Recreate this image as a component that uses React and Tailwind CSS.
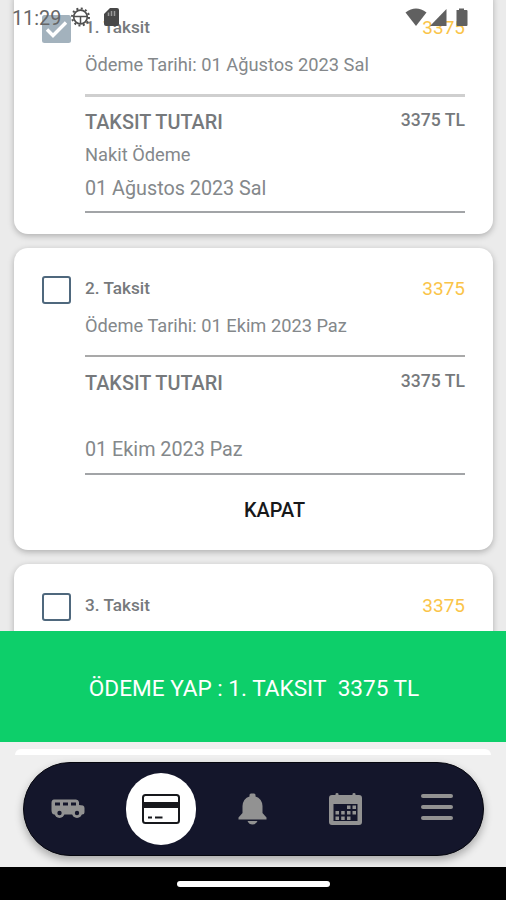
import React from "react";

function Check({ checked }) {
  return checked ? (
    <svg className="h-7 w-[29px] shrink-0" viewBox="0 0 29 28">
      <rect width="29" height="28" rx="2.5" fill="#a3b2bd" />
      <path d="M5 14.5 11 20.5 24 7.5" fill="none" stroke="#fff" strokeWidth="3.4" />
    </svg>
  ) : (
    <div className="h-7 w-[29px] shrink-0 rounded-[3px] border-2 border-[#4f687d] bg-white" />
  );
}

function T({ className = "", children }) {
  return <span className={`block h-6 leading-6 whitespace-pre ${className}`}>{children}</span>;
}

function Installment({ n, date, method, checked, close, headerOnly, box, rule, gap, paid }) {
  return (
    <section className={`ml-[14px] w-[479px] shrink-0 rounded-[14px] bg-white px-7 shadow-[0_2px_6px_rgba(0,0,0,0.26)] ${box}`}>
      <div className="flex h-[59px] items-start pt-7">
        <Check checked={checked} />
        <div className="ml-[14px] flex flex-1 justify-between">
          <T className="text-[17.2px] font-medium text-[#76797c]">{`${n}. Taksit`}</T>
          <T className="pt-px text-[19px] text-[#fac448]">3375</T>
        </div>
      </div>
      {!headerOnly && (
        <div className="ml-[43px]">
          <div className="h-[48px] pt-[7px]"><T className="text-[18.25px] text-[#84888b]">{`Ödeme Tarihi: ${date}`}</T></div>
          <div className={rule} />
          <div className={`flex justify-between ${gap}`}>
            <T className="pt-px text-[19.85px] font-medium text-[#76797c]">TAKSIT TUTARI</T>
            <T className="-mt-[2px] text-[17.6px] font-medium text-[#76797c]">3375 TL</T>
          </div>
          <div className="h-[33px] pt-[9px]">{method && <T className="text-[18.3px] text-[#84888b]">{method}</T>}</div>
          <div className={`pt-[10px] ${paid}`}><T className="text-[19.75px] text-[#84888b]">{date}</T></div>
          <div className="h-[2px] bg-[#a2a4a7]" />
        </div>
      )}
      {close && <div className="ml-[202px] mt-[24px]"><T className="text-[19.9px] font-medium text-[#17181a]">KAPAT</T></div>}
    </section>
  );
}

function StatusBar() {
  return (
    <header className="absolute left-0 top-0 z-10 flex h-9 w-full pl-3">
      <span className="mt-[7px] w-[58px] text-[19.8px] leading-6 text-[#666]">11:29</span>
      <svg className="mt-[7px] h-5 w-5" viewBox="0 0 20 20" fill="none" stroke="#505050">
        <circle cx="10.500" cy="10" r="6.800" strokeWidth="1.700" />
        <circle cx="10.500" cy="10" r="8.500" strokeWidth="2" strokeDasharray="2 2.450" />
        <path d="M4 9.500H17M10.500 9.500V16" strokeWidth="1.500" />
      </svg>
      <svg className="ml-[14px] mt-2 h-[18px] w-4" viewBox="0 0 16 18" fill="#484848">
        <path d="M6 0H13Q15 0 15 2V16Q15 18 13 18H2Q0 18 0 16V6Z" />
        <path d="M4.500 4.500V8M7.500 3V8M10.500 3V8" stroke="#999" strokeWidth="1.500" />
      </svg>
      <svg className="ml-auto mr-[38px] mt-2 h-[19px] w-[63px]" viewBox="0 0 63 19" fill="#606060">
        <path d="M.5 4.500Q11 -3.500 21.500 4.500L11 18Z" />
        <path d="M41.500 1V18H25Z" />
        <path d="M51.500 2H54V.5H59V2H61.500Q62.500 2 62.500 3V17Q62.500 18 61.500 18H52.500Q51.500 18 51.500 17Z" />
      </svg>
    </header>
  );
}

function BusIcon() {
  return (
    <svg width="34" height="20" viewBox="0 0 34 20" fill="#929292">
      <path d="M3 .5H25Q27.500.5 28 3V6L32 6.500Q33.500 7 33.500 9V13Q33.500 15.500 31 15.500H3Q.5 15 .5 11V4Q.5 .5 3 .5Z" />
      <path d="M4 3.500H9V6.500H4ZM12 3.500H17V6.500H12ZM20 3.500H25V6.500H20Z" fill="#14162b" />
      <circle cx="8.500" cy="14" r="5" /><circle cx="26" cy="14" r="5" />
      <circle cx="8.500" cy="14" r="2.200" fill="#14162b" /><circle cx="26" cy="14" r="2.200" fill="#14162b" />
    </svg>
  );
}

function CardIcon() {
  return (
    <svg width="38" height="30" viewBox="0 0 38 30" fill="none" stroke="#17181c">
      <rect x="1" y="1" width="36" height="28" rx="2.500" strokeWidth="2" />
      <path d="M1 11H37" strokeWidth="6" /><path d="M6 23.500H10M13 23.500H20.500" strokeWidth="2" />
    </svg>
  );
}

function BellIcon() {
  return (
    <svg width="29" height="32" viewBox="0 0 29 32" fill="#929292">
      <path d="M11.500 2Q11.500 .5 13 .5H16Q17.500 .5 17.500 2V3.500Q24 5.500 24.500 13V20L28.500 24.500V26.500H.5V24.500L4.500 20V13Q5 5.500 11.500 3.500ZM9.500 28H19.500Q18 31.500 14.500 31.500T9.500 28Z" />
    </svg>
  );
}

function CalendarIcon() {
  return (
    <svg width="33" height="32" viewBox="0 0 33 32" fill="#929292">
      <path fillRule="evenodd" d="M6.500 2V1Q6.500 0 8 0T9.500 1V2H23.500V1Q23.500 0 25 0T26.500 1V2H30Q33 2 33 5V29Q33 32 30 32H3Q0 32 0 29V5Q0 2 3 2ZM4.500 11V28H28.500V11Z" />
      <path d="M18 12.500h3.500v3.500h-3.500zM23.500 12.500h3.500v3.500h-3.500zM6.500 18h3.500v3.500h-3.500zM12.200 18h3.500v3.500h-3.500zM18 18h3.500v3.500h-3.500zM23.500 18h3.500v3.500h-3.500zM6.500 23.500h3.500v3.500h-3.500zM12.200 23.500h3.500v3.500h-3.500zM18 23.500h3.500v3.500h-3.500z" />
    </svg>
  );
}

export default function App() {
  return (
    <div className="relative flex h-[900px] w-[506px] flex-col overflow-hidden bg-[#efefef] font-['Roboto',sans-serif]">
      <StatusBar />
      <main className="flex h-[631px] shrink-0 flex-col gap-[14px] overflow-hidden bg-[#ebebeb]">
        <Installment n={1} date="01 Ağustos 2023 Sal" method="Nakit Ödeme" checked box="-mt-[13px] h-[247px]" rule="h-[3px] bg-[#cfcfcf]" gap="pt-[13px]" paid="h-[44px]" />
        <Installment n={2} date="01 Ekim 2023 Paz" close box="h-[302px]" rule="h-[2px] bg-[#a9a9a9]" gap="pt-[14px]" paid="h-[45px]" />
        <Installment n={3} headerOnly box="h-[302px] pt-px" />
      </main>
      <button className="flex h-[111px] w-full shrink-0 items-center justify-center bg-[#0dcf6a] pt-[4px] pl-[2px]">
        <T className="text-[22.6px] text-white">{"ÖDEME YAP : 1. TAKSIT\u00a0 3375 TL"}</T>
      </button>
      <div className="h-5 shrink-0 px-[15px] pt-[7px]">
        <div className="h-[6px] rounded-t-[12px] bg-white" />
      </div>
      <nav className="ml-[23px] mr-[22px] flex h-[94px] shrink-0 items-center rounded-full border border-[#06070f] bg-[#14162b] pb-px shadow-[0_4px_9px_rgba(0,0,0,0.3)]">
        <div className="flex w-1/5 justify-center pr-1"><BusIcon /></div>
        <div className="flex w-1/5 justify-center pr-px"><div className="flex h-[72px] w-[70px] shrink-0 items-center justify-center rounded-full bg-white"><CardIcon /></div></div>
        <div className="flex w-1/5 justify-center pr-px"><BellIcon /></div>
        <div className="flex w-1/5 justify-center"><CalendarIcon /></div>
        <div className="flex w-1/5 justify-center pb-[3px]"><div className="flex w-8 flex-col gap-[7px]"><i className="h-1 rounded bg-[#929292]" /><i className="h-1 rounded bg-[#929292]" /><i className="h-1 rounded bg-[#929292]" /></div></div>
      </nav>
      <footer className="mt-auto flex h-[33px] shrink-0 items-center justify-center bg-black"><div className="h-[6px] w-[153px] rounded-full bg-white" /></footer>
    </div>
  );
}
